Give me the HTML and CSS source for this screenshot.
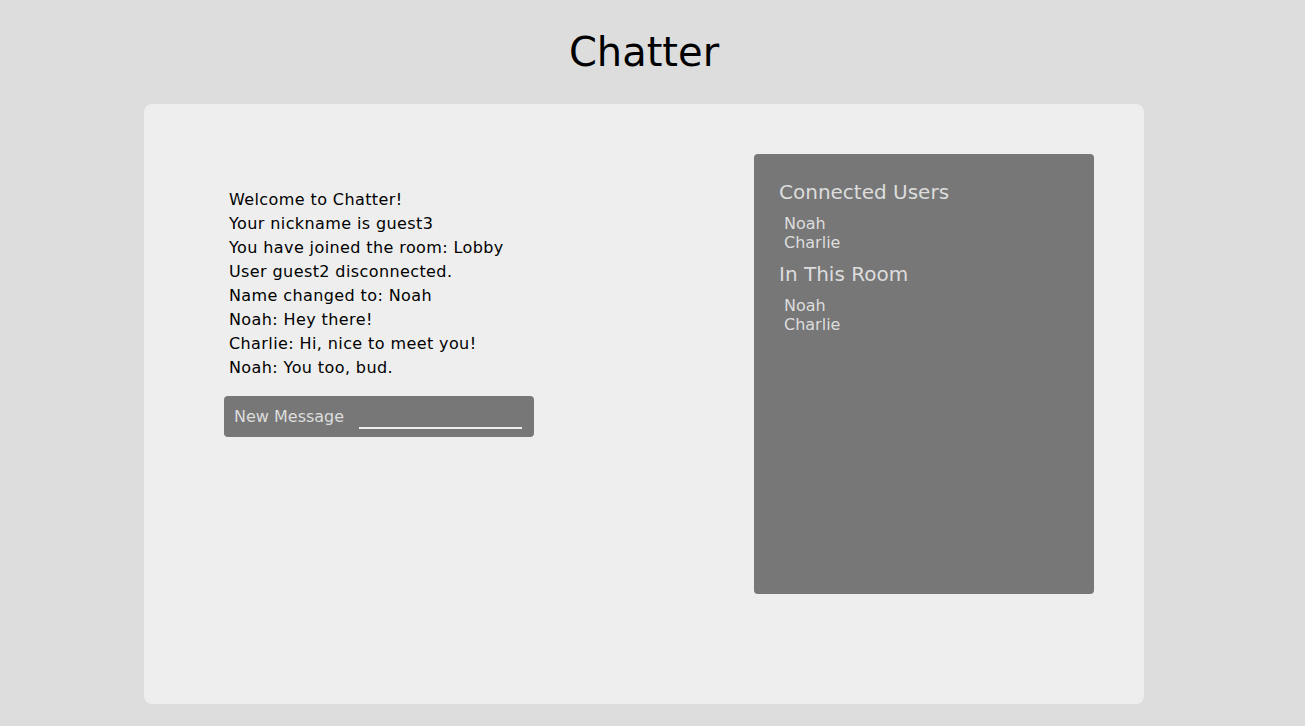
FILE: index.html
```html
<!DOCTYPE html>
<html>
<head>
<meta charset="utf-8">
<title>Chatter</title>
<link rel="stylesheet" href="styles.css">
</head>
<body>
<h1 class="title">Chatter</h1>
<div class="card">
  <div class="chat">
    <div class="messages">
      <div>Welcome to Chatter!</div>
      <div>Your nickname is guest3</div>
      <div>You have joined the room: Lobby</div>
      <div>User guest2 disconnected.</div>
      <div>Name changed to: Noah</div>
      <div>Noah: Hey there!</div>
      <div>Charlie: Hi, nice to meet you!</div>
      <div>Noah: You too, bud.</div>
    </div>
    <form class="send">
      <label class="send-label">New Message</label>
      <input class="send-input" type="text">
    </form>
  </div>
  <div class="sidebar">
    <h2 class="side-title">Connected Users</h2>
    <ul class="users">
      <li>Noah</li>
      <li>Charlie</li>
    </ul>
    <h2 class="side-title">In This Room</h2>
    <ul class="users">
      <li>Noah</li>
      <li>Charlie</li>
    </ul>
  </div>
</div>
</body>
</html>
```

FILE: styles.css
```css
* { box-sizing: border-box; }
html, body { margin: 0; padding: 0; }
body {
  background: #dddddd;
  font-family: "DejaVu Sans", Verdana, sans-serif;
  color: #000;
  padding-right: 17px;
}
.title {
  margin: 0;
  padding-top: 27px;
  height: 104px;
  text-align: center;
  font-weight: normal;
  font-size: 40px;
  line-height: 50px;
}
.card {
  width: 1000px;
  height: 600px;
  margin: 0 auto;
  background: #eeeeee;
  border-radius: 8px;
  padding: 50px;
  display: flex;
  justify-content: space-between;
  align-items: flex-start;
}
.chat {
  margin-left: 30px;
  padding-top: 34px;
}
.messages {
  padding-left: 5px;
  font-size: 16px;
  line-height: 24px;
  letter-spacing: 0.4px;
}
.send {
  margin: 16px 0 0;
  width: 310px;
  height: 41px;
  background: #777777;
  border-radius: 4px;
  display: flex;
  align-items: center;
  padding: 0 0 0 10px;
}
.send-label {
  color: #dddddd;
  font-size: 16px;
  white-space: nowrap;
}
.send-input {
  margin-left: 15px;
  width: 163px;
  flex: none;
  height: 20px;
  background: transparent;
  border: none;
  border-bottom: 2px solid #eeeeee;
  outline: none;
  padding: 0;
  margin-top: 4px;
}
.sidebar {
  width: 340px;
  height: 440px;
  background: #777777;
  border-radius: 4px;
  padding: 25px 25px;
  color: #dddddd;
}
.side-title {
  margin: 0;
  font-weight: normal;
  font-size: 20px;
  line-height: 26px;
}
.users {
  list-style: none;
  margin: 9px 0 9px;
  padding: 0 0 0 5px;
  font-size: 16px;
  line-height: 19px;
}
```
